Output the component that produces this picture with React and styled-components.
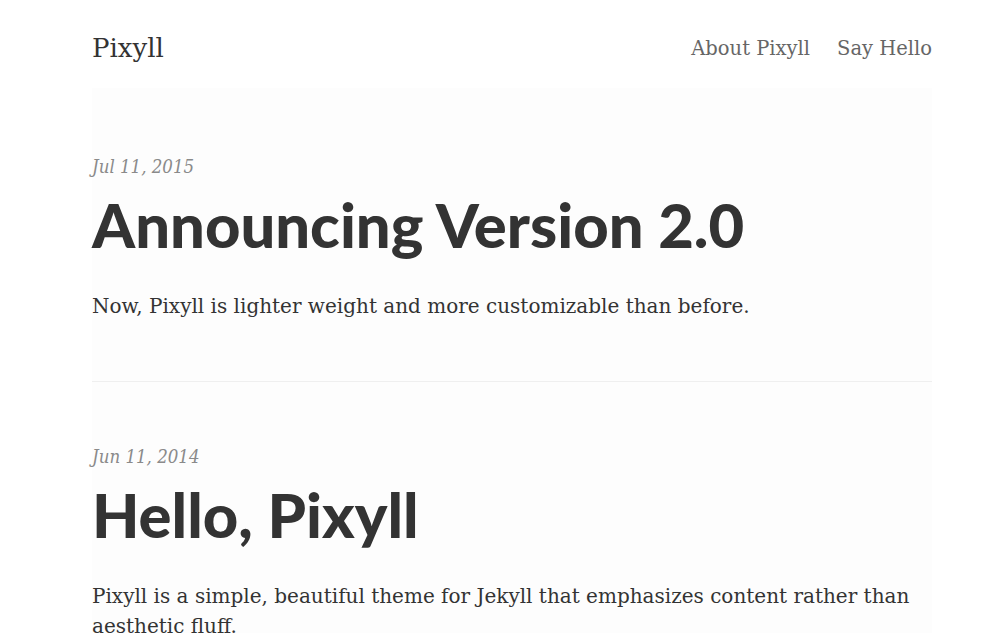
import React from "react";
import styled, { createGlobalStyle } from "styled-components";

const GlobalStyle = createGlobalStyle`
  html, body {
    margin: 0;
    padding: 0;
    background: #ffffff;
  }
  body {
    font-family: "DejaVu Serif", serif;
    color: #333333;
  }
`;

const posts = [
  {
    date: "Jul 11, 2015",
    title: "Announcing Version 2.0",
    summary: "Now, Pixyll is lighter weight and more customizable than before.",
  },
  {
    date: "Jun 11, 2014",
    title: "Hello, Pixyll",
    summary:
      "Pixyll is a simple, beautiful theme for Jekyll that emphasizes content rather than aesthetic fluff.",
  },
];

const App = () => {
  return (
    <Page>
      <GlobalStyle />
      <Header>
        <SiteTitle href="#">Pixyll</SiteTitle>
        <Nav>
          <NavLink href="#">About Pixyll</NavLink>
          <NavLink href="#">Say Hello</NavLink>
        </Nav>
      </Header>
      <Main>
        {posts.map((post, i) => (
          <Post key={post.title} $last={i === posts.length - 1}>
            <PostDate>{post.date}</PostDate>
            <PostTitle>{post.title}</PostTitle>
            <Summary>{post.summary}</Summary>
          </Post>
        ))}
      </Main>
    </Page>
  );
};

const Page = styled.div`
  padding: 0 75px 0 92px;
  min-height: 633px;
  box-sizing: border-box;
`;

const Header = styled.header`
  display: flex;
  align-items: center;
  justify-content: space-between;
  height: 80px;
  padding-top: 8px;
`;

const SiteTitle = styled.a`
  font-family: "DejaVu Serif", serif;
  font-size: 26px;
  color: #333;
  text-decoration: none;
`;

const Nav = styled.nav`
  display: flex;
  gap: 27px;
`;

const NavLink = styled.a`
  font-family: "DejaVu Serif", serif;
  font-size: 19.5px;
  color: #666;
  text-decoration: none;
`;

const Main = styled.main`
  background: #fdfdfd;
  padding-top: 8px;
`;

const Post = styled.article`
  padding: 56px 0 ${(p) => (p.$last ? "40px" : "60px")};
  border-bottom: ${(p) => (p.$last ? "none" : "1px solid #efefef")};
  & + & {
    padding-top: 60px;
  }
`;

const PostDate = styled.div`
  font-family: "DejaVu Serif Condensed", "DejaVu Serif", serif;
  font-style: italic;
  font-size: 18.5px;
  line-height: 30px;
  color: #8a8a8a;
`;

const PostTitle = styled.h1`
  font-family: Lato, "Liberation Sans", sans-serif;
  font-weight: 900;
  font-size: 61.5px;
  line-height: 66px;
  color: #333;
  margin: 9px 0 34px;
`;

const Summary = styled.p`
  font-size: 20px;
  line-height: 30px;
  color: #333;
  margin: 0;
`;

export default App;
